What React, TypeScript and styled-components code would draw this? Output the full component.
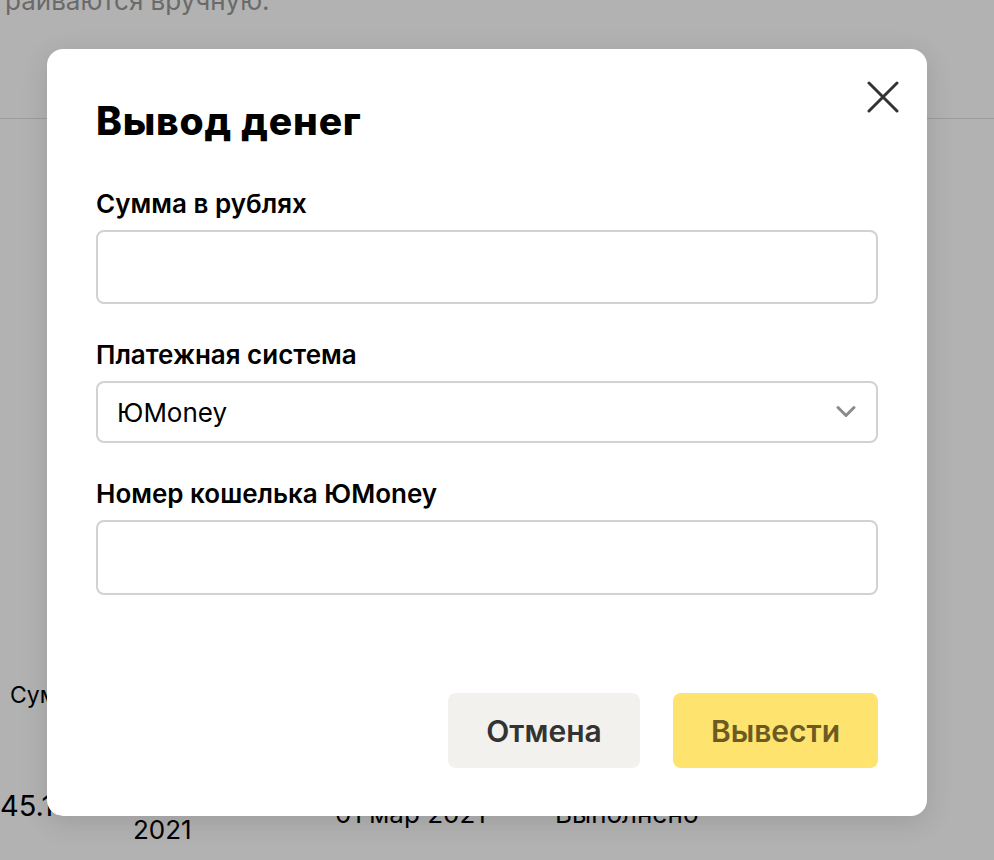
import React from 'react';
import styled, { createGlobalStyle } from 'styled-components';

const GlobalStyle = createGlobalStyle`
  html, body {
    margin: 0;
    padding: 0;
    background: #ffffff;
  }
  body {
    font-family: Inter, 'Noto Sans', Arial, sans-serif;
    color: #000;
  }
`;

const Page = styled.div`
  position: relative;
  width: 994px;
  height: 860px;
  overflow: hidden;
  background: #ffffff;
`;

const PageNote = styled.p`
  margin: -14px 0 0 5px;
  font-size: 26px;
  line-height: 30px;
  color: #999999;
`;

const Divider = styled.div`
  margin-top: 102px;
  height: 1px;
  background: #e0e0e0;
`;

const HistoryHead = styled.div`
  margin: 562px 0 0 10px;
  font-size: 23px;
  line-height: 28px;
`;

const HistoryRow = styled.div`
  display: grid;
  grid-template-columns: 133px 202px 220px auto;
  margin-top: 82px;
  font-size: 26px;
  line-height: 30px;
  align-items: start;
`;

const Cell = styled.div<{ $shift?: number; $size?: number }>`
  margin-top: ${({ $shift }) => $shift ?? 0}px;
  font-size: ${({ $size }) => $size ?? 26}px;
`;

const Overlay = styled.div`
  position: absolute;
  inset: 0;
  background: rgba(0, 0, 0, 0.3);
  padding: 49px 0 0 47px;
  box-sizing: border-box;
`;

const Modal = styled.div`
  position: relative;
  width: 880px;
  height: 767px;
  box-sizing: border-box;
  padding: 49px 49px 48px;
  background: #ffffff;
  border-radius: 16px;
  box-shadow: 0 6px 28px rgba(0, 0, 0, 0.12);
  display: flex;
  flex-direction: column;
`;

const CloseButton = styled.button`
  position: absolute;
  top: 31px;
  right: 27px;
  width: 34px;
  height: 34px;
  padding: 0;
  border: 0;
  background: transparent;
  cursor: pointer;
  display: flex;
  align-items: center;
  justify-content: center;
`;

const Title = styled.h2`
  margin: 0 0 44px;
  font-size: 39px;
  line-height: 46px;
  font-weight: 800;
  letter-spacing: 0.8px;
`;

const Fields = styled.div`
  display: flex;
  flex-direction: column;
  gap: 35px;
`;

const Field = styled.label`
  display: flex;
  flex-direction: column;
  gap: 10px;
`;

const FieldLabel = styled.span`
  font-size: 26px;
  line-height: 32px;
  font-weight: 600;
  color: #000;
`;

const TextInput = styled.input<{ $height: number }>`
  box-sizing: border-box;
  width: 100%;
  height: ${({ $height }) => $height}px;
  border: 2px solid #d2d2d2;
  border-radius: 8px;
  padding: 0 19px;
  font: inherit;
  font-size: 26px;
  outline: none;
`;

const SelectBox = styled.div`
  box-sizing: border-box;
  height: 62px;
  border: 2px solid #d2d2d2;
  border-radius: 8px;
  padding: 0 19px 0 19px;
  display: flex;
  align-items: center;
  justify-content: space-between;
  font-size: 26px;
  color: #000;
`;

const Actions = styled.div`
  margin-top: auto;
  display: flex;
  justify-content: flex-end;
  gap: 33px;
`;

const ActionButton = styled.button<{ $primary?: boolean }>`
  height: 75px;
  min-width: ${({ $primary }) => ($primary ? 205 : 192)}px;
  border: 0;
  border-radius: 8px;
  font-family: inherit;
  font-size: 30px;
  font-weight: 600;
  background: ${({ $primary }) => ($primary ? '#fee36e' : '#f2f1ee')};
  color: ${({ $primary }) => ($primary ? '#6b5b22' : '#333333')};
  cursor: pointer;
`;

export default function App() {
  return (
    <>
      <GlobalStyle />
      <Page>
        <PageNote>райваются вручную.</PageNote>
        <Divider />
        <HistoryHead>Сумма</HistoryHead>
        <HistoryRow>
          <Cell $size={29}>45.15 ₽</Cell>
          <Cell $shift={-6}>
            01 мар
            <br />
            2021
          </Cell>
          <Cell $shift={8}>01 мар 2021</Cell>
          <Cell $shift={8}>Выполнено</Cell>
        </HistoryRow>
        <Overlay>
          <Modal>
            <CloseButton aria-label="Закрыть">
              <svg width="32" height="32" viewBox="0 0 32 32">
                <path
                  d="M2 2 L30 30 M30 2 L2 30"
                  stroke="#333"
                  strokeWidth="3"
                  strokeLinecap="round"
                />
              </svg>
            </CloseButton>
            <Title>Вывод денег</Title>
            <Fields>
              <Field>
                <FieldLabel>Сумма в рублях</FieldLabel>
                <TextInput $height={74} />
              </Field>
              <Field>
                <FieldLabel>Платежная система</FieldLabel>
                <SelectBox>
                  <span>ЮMoney</span>
                  <svg width="22" height="14" viewBox="0 0 22 14">
                    <path
                      d="M3 2.5 L11 10.5 L19 2.5"
                      fill="none"
                      stroke="#8a8a8a"
                      strokeWidth="3"
                      strokeLinecap="round"
                      strokeLinejoin="round"
                    />
                  </svg>
                </SelectBox>
              </Field>
              <Field>
                <FieldLabel>Номер кошелька ЮMoney</FieldLabel>
                <TextInput $height={75} />
              </Field>
            </Fields>
            <Actions>
              <ActionButton>Отмена</ActionButton>
              <ActionButton $primary>Вывести</ActionButton>
            </Actions>
          </Modal>
        </Overlay>
      </Page>
    </>
  );
}
